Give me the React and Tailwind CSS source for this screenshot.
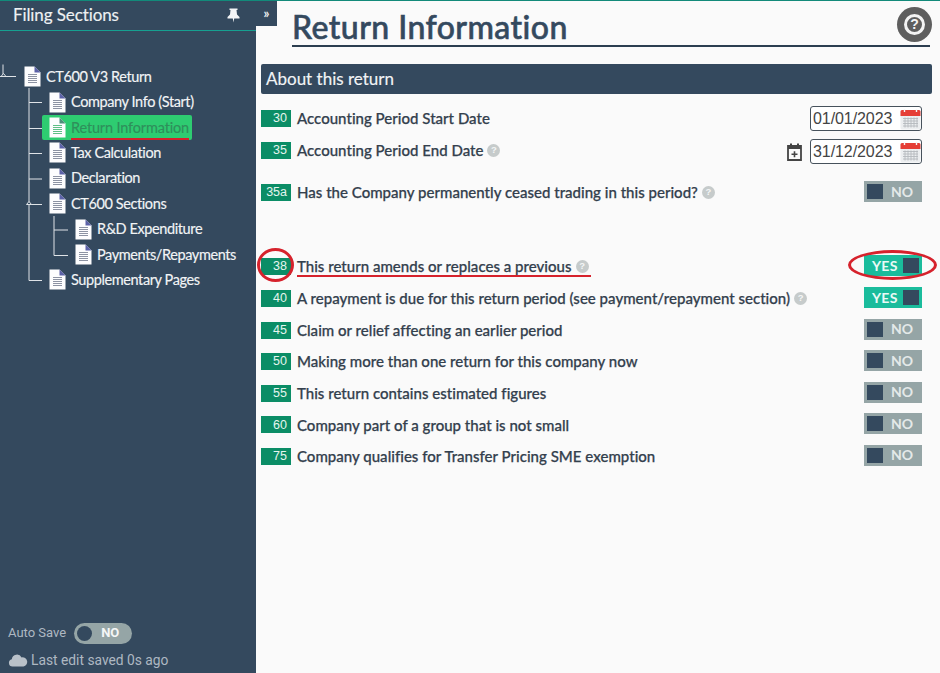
import React from "react";

function DocIcon({ green }) {
  const line = green ? "#5fbf86" : "#8d93a3";
  return (
    <svg width="17" height="21" viewBox="0 0 17 21" className="shrink-0">
      <path d="M0.5 0.5H10.5L16.5 6.5V20.5H0.5Z" fill="#fdfdfe" />
      <path d="M10.5 0.5L16.5 6.5H10.5Z" fill={green ? "#4f8f7a" : "#5c62a8"} />
      <path d={"M4 8.5H13M4 10.5H13M4 12.5H13M4 14.5H13M4 16.5H13"} stroke={line} strokeWidth="1.1" />
    </svg>
  );
}

function TreeRow({ indent, label, active }) {
  return (
    <div className={"relative flex h-[25.4px] items-center " + indent}>
      <div className={active ? "flex h-[25px] items-center gap-[5px] rounded-[2px] bg-[#2ecc71] pl-[7px] pr-[3px] -ml-[7px]" : "flex items-center gap-[5px]"}>
        <DocIcon green={active} />
        <span className={"relative text-[14.5px] [-webkit-text-stroke:0.15px] " + (active ? "tracking-[-0.16px] text-[#2f8f5b]" : "tracking-[-0.4px] text-[#f2f4f6]")}>
          {label}
          {active && <span className="absolute -bottom-[2px] left-0 right-0 h-[2px] bg-[#d6222c]" />}
        </span>
      </div>
    </div>
  );
}

function Badge({ n }) {
  return (
    <span className="flex h-[17px] w-[30px] shrink-0 items-center justify-end bg-[#0b8d66] pr-[4px] font-['Liberation_Sans',sans-serif] text-[12.5px] text-[#e5f5ef]">
      {n}
    </span>
  );
}

function Help() {
  return (
    <span className="ml-[4px] flex h-[13px] w-[13px] shrink-0 items-center justify-center rounded-full bg-[#c6cbcb] font-['Liberation_Sans',sans-serif] text-[9.5px] font-bold text-[#f4f6f6]">
      ?
    </span>
  );
}

function Toggle({ on }) {
  return on ? (
    <div className="flex h-[21px] w-[58px] items-center justify-between bg-[#1abc9c] pl-[8px] pr-[3px] text-[14px] font-bold tracking-[0.3px] text-[#eafaf6]">
      <span className="pb-[1px]">YES</span>
      <span className="h-[15px] w-[16px] bg-[#34495e]" />
    </div>
  ) : (
    <div className="flex h-[21px] w-[58px] items-center justify-between bg-[#95a5a6] pl-[3px] pr-[9px] text-[14px] font-bold text-[#e4e9e9]">
      <span className="h-[15px] w-[16px] bg-[#34495e]" />
      <span className="pb-[1px]">NO</span>
    </div>
  );
}

const labelCls = "ml-[6px] whitespace-nowrap text-[15px] font-medium tracking-[0.02px] text-[#33404d] [-webkit-text-stroke:0.25px]";

function Row({ n, label, help, on, className = "" }) {
  return (
    <div className={"flex h-[21px] items-center " + className}>
      <Badge n={n} />
      <span className={labelCls}>{label}</span>
      {help && <Help />}
      <div className="ml-auto mr-[10px] -mt-[2px]">
        <Toggle on={on} />
      </div>
    </div>
  );
}

function CalendarGlyph() {
  return (
    <svg width="21" height="22" viewBox="0 0 21 22" className="shrink-0">
      <rect x="0.5" y="2" width="20" height="19.5" rx="1.5" fill="#eceef0" />
      <path d="M0.5 8V3.5A1.5 1.5 0 0 1 2 2H19A1.5 1.5 0 0 1 20.5 3.5V8Z" fill="#e53e36" />
      <path d="M4.5 1V4M16.5 1V4" stroke="#f6f6f6" strokeWidth="1.4" />
      <path d="M3 10.5H18M3 13H18M3 15.5H18M3 18H18M5 9.5V19.5M8 9.5V19.5M11 9.5V19.5M14 9.5V19.5M17 9.5V19.5" stroke="#b5b9bd" strokeWidth="0.9" />
    </svg>
  );
}

function DateBox({ value }) {
  return (
    <div className="flex h-[25px] w-[112px] items-center justify-between rounded-[3px] border border-[#47525c] bg-white pl-[2px] font-['Liberation_Sans',sans-serif] text-[16px] tracking-[-0.08px] text-[#444]">
      <span>{value}</span>
      <CalendarGlyph />
    </div>
  );
}

export default function App() {
  return (
    <div className="flex h-[673px] w-[940px] overflow-hidden bg-[#fafafa] font-['Lato',sans-serif]">
      <aside className="flex h-full w-[256px] shrink-0 flex-col bg-[#34495e]">
        <div className="flex h-[31px] items-center justify-between border-y border-t-[#128a7a] border-b-[#16a091] pl-[13px] pr-[16px] text-[#eef1f3]">
          <span className="pb-[1px] text-[17px] tracking-[-0.1px] [-webkit-text-stroke:0.15px]">Filing Sections</span>
          <svg width="13" height="15" viewBox="0 0 13 15">
            <path d="M2.5 0.5H10.5V2H9.5L10 6.5L12.5 9V10.5H7.2L6.5 14.5L5.8 10.5H0.5V9L3 6.5L3.5 2H2.5Z" fill="#f2f4f6" />
          </svg>
        </div>
        <div className="relative mt-[33px]">
          {/* tree connector lines */}
          <svg width="80" height="230" className="absolute left-0 top-0">
            <path d="M3 0.5V12.5M0 12.5H16" stroke="#dfe3e7" strokeWidth="1" fill="none" />
            <path d="M1 12.5L3.5 9.5L6 12.5Z" fill="#34495e" stroke="#dfe3e7" strokeWidth="1" />
            <path d="M29 24V216.5H42M29 38.5H42M29 64.5H42M29 89.5H42M29 115H42M29 140.5H42" stroke="#dfe3e7" strokeWidth="1" fill="none" />
            <path d="M26.5 140.5L29 137.5L31.5 140.5Z" fill="#34495e" stroke="#dfe3e7" strokeWidth="1" />
            <path d="M54 152V191.5H68M54 166H68" stroke="#dfe3e7" strokeWidth="1" fill="none" />
          </svg>
          <TreeRow indent="pl-[24px]" label="CT600 V3 Return" />
          <TreeRow indent="pl-[49px]" label="Company Info (Start)" />
          <TreeRow indent="pl-[49px]" label="Return Information" active />
          <TreeRow indent="pl-[49px]" label="Tax Calculation" />
          <TreeRow indent="pl-[49px]" label="Declaration" />
          <TreeRow indent="pl-[49px]" label="CT600 Sections" />
          <TreeRow indent="pl-[75px]" label="R&D Expenditure" />
          <TreeRow indent="pl-[75px]" label="Payments/Repayments" />
          <TreeRow indent="pl-[49px]" label="Supplementary Pages" />
        </div>
        <div className="mt-auto mb-[1px] pl-[8px] font-['Roboto',sans-serif] text-[#aeb8c2]">
          <div className="flex h-[24px] items-center gap-[8px] text-[13px]">
            <span>Auto Save</span>
            <div className="flex h-[21px] w-[58px] items-center rounded-full bg-[#95a5a6] pl-[3px] text-[13px] font-bold text-[#f4f6f6]">
              <span className="h-[15px] w-[15px] rounded-full bg-[#34495e]" />
              <span className="ml-[9px]">NO</span>
            </div>
          </div>
          <div className="mt-[3px] flex h-[24px] items-center gap-[3px] text-[13.8px]">
            <svg width="20" height="14" viewBox="0 0 20 14" className="shrink-0">
              <path d="M4.5 13.5A3.7 3.7 0 0 1 3.8 6.2A5.2 5.2 0 0 1 13.6 4.4A4.6 4.6 0 0 1 15.5 13.5Z" fill="#b9c1c9" />
            </svg>
            <span>Last edit saved 0s ago</span>
          </div>
        </div>
      </aside>
      <main className="relative min-w-0 flex-1 pl-[5px] pr-[8px]">
        <div className="absolute left-0 top-0 h-[1px] w-full bg-[#128a7a]" />
        <div className="absolute left-0 top-[1px] flex h-[25px] w-[21px] items-center justify-center bg-[#34495e] text-[13px] font-bold text-[#eef1f3]">»</div>
        <div className="ml-[31px] mr-[2px] flex h-[47px] items-end border-b-2 border-[#2c3e50]">
          <h1 className="text-[32px] font-medium leading-[36px] tracking-[0.43px] text-[#34495e] [-webkit-text-stroke:0.6px]">Return Information</h1>
        </div>
        <div className="absolute right-[8px] top-[7px] flex h-[35px] w-[35px] items-center justify-center rounded-full bg-[#5e5e5e]">
          <span className="flex h-[21px] w-[21px] items-center justify-center rounded-full border-[3px] border-[#f3f3f3] font-['Liberation_Sans',sans-serif] text-[14px] font-bold text-[#f3f3f3]">?</span>
        </div>
        <div className="mt-[17px] flex h-[30px] items-center rounded-[2px] bg-[#34495e] pl-[5px] text-[17px] text-[#f2f4f6] [-webkit-text-stroke:0.15px]">About this return</div>

        <div className="relative mt-[14px]">
          <div className="flex h-[21px] items-center">
            <Badge n="30" />
            <span className={labelCls}>Accounting Period Start Date</span>
            <div className="ml-auto mr-[10px]"><DateBox value="01/01/2023" /></div>
          </div>
          <div className="mt-[11px] flex h-[21px] items-center">
            <Badge n="35" />
            <span className={labelCls}>Accounting Period End Date</span>
            <Help />
            <div className="ml-auto mr-[10px] mt-[2px] flex items-center gap-[8px]">
              <svg width="15" height="18" viewBox="0 0 15 18">
                <path d="M1 3H14V17H1Z" fill="none" stroke="#444" strokeWidth="1.8" />
                <path d="M1 3H14V6H1ZM3 0.5H5V3H3ZM10 0.5H12V3H10ZM4.5 10.5H10.5V12H4.5ZM6.7 8.2H8.3V14.3H6.7Z" fill="#444" />
              </svg>
              <DateBox value="31/12/2023" />
            </div>
          </div>
          <Row n="35a" label="Has the Company permanently ceased trading in this period?" help on={false} className="mt-[21px]" />
          <Row n="38" label="This return amends or replaces a previous" help on={true} className="mt-[53px]" />
          <Row n="40" label="A repayment is due for this return period (see payment/repayment section)" help on={true} className="mt-[11px]" />
          <Row n="45" label="Claim or relief affecting an earlier period" on={false} className="mt-[10.6px]" />
          <Row n="50" label="Making more than one return for this company now" on={false} className="mt-[10.6px]" />
          <Row n="55" label="This return contains estimated figures" on={false} className="mt-[10.6px]" />
          <Row n="60" label="Company part of a group that is not small" on={false} className="mt-[10.6px]" />
          <Row n="75" label="Company qualifies for Transfer Pricing SME exemption" on={false} className="mt-[10.6px]" />

          {/* red annotations drawn over the form */}
          <div className="absolute left-[-4px] top-[140px] h-[34px] w-[37px] rounded-[50%] border-[3px] border-[#d6222c]" />
          <div className="absolute left-[36px] top-[167px] h-[2px] w-[294px] bg-[#d6222c]" />
          <div className="absolute left-[587px] top-[142px] h-[30px] w-[89px] rounded-[50%] border-[3px] border-[#d6222c]" />
        </div>
      </main>
    </div>
  );
}
